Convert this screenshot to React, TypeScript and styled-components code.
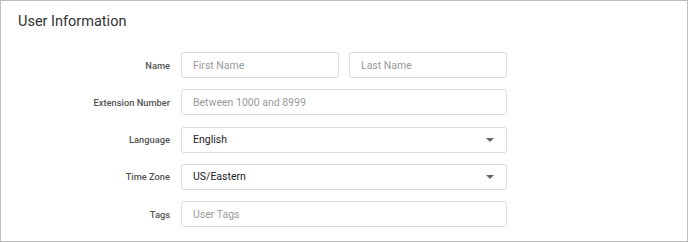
import styled, { createGlobalStyle } from "styled-components";

const GlobalStyle = createGlobalStyle`
  html, body {
    margin: 0;
    padding: 0;
    background: #ffffff;
  }
  body {
    font-family: Roboto, "Liberation Sans", Arial, sans-serif;
  }
  * {
    box-sizing: border-box;
  }
`;

const Panel = styled.section`
  width: 688px;
  height: 242px;
  border: 1px solid #bdbdbd;
  background: #fff;
  overflow: hidden;
`;

const Title = styled.h2`
  margin: 0;
  padding: 11px 17px 0;
  font-size: 14.5px;
  line-height: 20px;
  font-weight: 400;
  color: #333;
`;

const Form = styled.div`
  margin-top: 20px;
  display: grid;
  grid-template-columns: 169px 326px;
  column-gap: 11px;
  row-gap: 11.3px;
  align-items: center;
`;

const Label = styled.label`
  text-align: right;
  font-size: 9.3px;
  font-weight: 500;
  color: #555;
`;

const Pair = styled.div`
  display: grid;
  grid-template-columns: 1fr 1fr;
  gap: 10px;
`;

const Field = styled.div<{ $filled?: boolean }>`
  position: relative;
  height: 26px;
  border: 1px solid #dcdcdc;
  border-radius: 3px;
  padding: 0 11px;
  display: flex;
  align-items: center;
  font-size: 10.5px;
  color: ${(p) => (p.$filled ? "#222" : "#9a9a9a")};
`;

const Caret = styled.span`
  position: absolute;
  right: 12px;
  top: 50%;
  margin-top: -2px;
  width: 0;
  height: 0;
  border-left: 4px solid transparent;
  border-right: 4px solid transparent;
  border-top: 4px solid #666;
`;

const rows = [
  { label: "Extension Number", value: "Between 1000 and 8999" },
  { label: "Language", value: "English", select: true },
  { label: "Time Zone", value: "US/Eastern", select: true },
  { label: "Tags", value: "User Tags" },
];

export default function App() {
  return (
    <>
      <GlobalStyle />
      <Panel>
        <Title>User Information</Title>
        <Form>
          <Label>Name</Label>
          <Pair>
            <Field>First Name</Field>
            <Field>Last Name</Field>
          </Pair>
          {rows.map((r) => (
            <>
              <Label key={r.label + "-l"}>{r.label}</Label>
              <Field key={r.label} $filled={r.select}>
                {r.value}
                {r.select && <Caret />}
              </Field>
            </>
          ))}
        </Form>
      </Panel>
    </>
  );
}
